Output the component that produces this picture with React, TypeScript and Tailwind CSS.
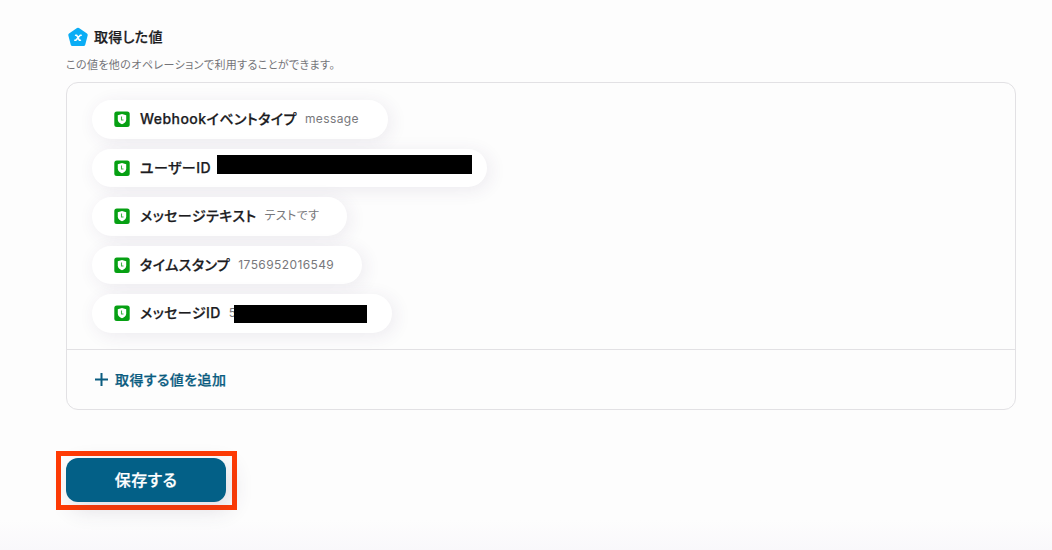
import React from 'react';

interface ValueItem {
  label: string;
  value?: string;
  width: string;
  mask?: string;
}

const items: ValueItem[] = [
  { label: 'Webhookイベントタイプ', value: 'message', width: 'w-[296px]' },
  {
    label: 'ユーザーID',
    width: 'w-[395px]',
    mask: 'left-[125px] top-[6px] w-[255px] h-[19px]',
  },
  { label: 'メッセージテキスト', value: 'テストです', width: 'w-[255px]' },
  { label: 'タイムスタンプ', value: '1756952016549', width: 'w-[270px]' },
  {
    label: 'メッセージID',
    value: '5',
    width: 'w-[300px]',
    mask: 'left-[142px] top-[11px] w-[133px] h-[18px]',
  },
];

function PentagonIcon() {
  return (
    <svg width="22" height="22" viewBox="0 0 22 22" aria-hidden="true">
      <path
        d="M11 3.4 L19 9 L16.6 18.2 H5.4 L3 9 Z"
        fill="#0badf5"
        stroke="#0badf5"
        strokeWidth="3.4"
        strokeLinejoin="round"
      />
      <path
        d="M8.6 9.2h1l2.7 5h1.1M14.2 9.2h-.9L8.8 14.2h-1"
        fill="none"
        stroke="#fff"
        strokeWidth="1.6"
        strokeLinecap="round"
        strokeLinejoin="round"
      />
    </svg>
  );
}

function ShieldIcon() {
  return (
    <svg width="16" height="16" viewBox="0 0 16 16" aria-hidden="true">
      <rect x="0.3" y="0.5" width="15.4" height="15.4" rx="2.5" fill="#06a013" />
      <path
        d="M8 3 L12.2 4.2 V8.4 C12.2 10.9 10.2 12.4 8 13.2 C5.8 12.4 3.8 10.9 3.8 8.4 V4.2 Z"
        fill="#fff"
      />
      <path
        d="M7.5 5.6 V9 H9.5"
        fill="none"
        stroke="#3fb548"
        strokeWidth="1.1"
      />
    </svg>
  );
}

function ValuePill({ label, value, width, mask }: ValueItem) {
  return (
    <li
      className={`relative flex h-[38.5px] items-center rounded-full bg-white pl-[22px] shadow-[3px_3px_18px_rgba(70,40,100,0.09)] ${width}`}
    >
      <ShieldIcon />
      <span className="mb-px ml-[10px] whitespace-nowrap text-[14px] font-medium tracking-[0.45px] text-[#1c1c1f] [-webkit-text-stroke:0.25px]">
        {label}
      </span>
      {value && (
        <span className="ml-2 whitespace-nowrap text-[12px] tracking-[0.4px] text-[#77777b]">
          {value}
        </span>
      )}
      {mask && <span className={`absolute bg-black ${mask}`} />}
    </li>
  );
}

function App() {
  return (
    <div className="h-[550px] w-[1052px] overflow-hidden bg-[linear-gradient(#fdfdfd_520px,#f9f8fb_550px)] pl-[66px] pt-[26px] font-['Inter','Noto_Sans_CJK_JP',sans-serif] [font-feature-settings:'palt']">
      <div className="flex h-[22px] items-center">
        <div className="ml-px">
          <PentagonIcon />
        </div>
        <h2 className="mb-0.5 ml-[5px] text-[14px] font-medium tracking-[0.3px] text-[#1c1c1f] [-webkit-text-stroke:0.25px]">
          取得した値
        </h2>
      </div>
      <p className="mt-[9px] h-4 text-[11px] leading-4 tracking-[0.4px] text-[#747478]">
        この値を他のオペレーションで利用することができます。
      </p>

      <section className="mt-[9px] h-[328px] w-[950px] rounded-xl border border-[#e2e1e4]">
        <ul className="flex h-[267px] flex-col gap-[10px] border-b border-[#e2e1e4] pl-[25px] pt-[17px]">
          {items.map((item) => (
            <ValuePill key={item.label} {...item} />
          ))}
        </ul>
        <button
          type="button"
          className="flex h-[60px] items-center pl-[28px] text-[14px] font-medium tracking-[0.4px] text-[#0b5c80]"
        >
          <svg
            className="mb-0.5"
            width="13"
            height="13"
            viewBox="0 0 13 13"
            aria-hidden="true"
          >
            <path d="M6.5 0v13M0 6.5h13" stroke="currentColor" strokeWidth="2" />
          </svg>
          <span className="mb-0.5 ml-[7px] [-webkit-text-stroke:0.25px]">
            取得する値を追加
          </span>
        </button>
      </section>

      <div className="-ml-[10px] mt-[41px] flex h-[59px] w-[181px] border-[5px] border-[#ff3b05] pl-[5px] pt-[2px]">
        <button
          type="button"
          className="h-11 w-40 rounded-xl bg-[#036087] text-[16px] font-medium tracking-[0.4px] text-white shadow-[5px_7px_22px_rgba(60,50,90,0.16)] [-webkit-text-stroke:0.25px]"
        >
          保存する
        </button>
      </div>
    </div>
  );
}

export default App;
